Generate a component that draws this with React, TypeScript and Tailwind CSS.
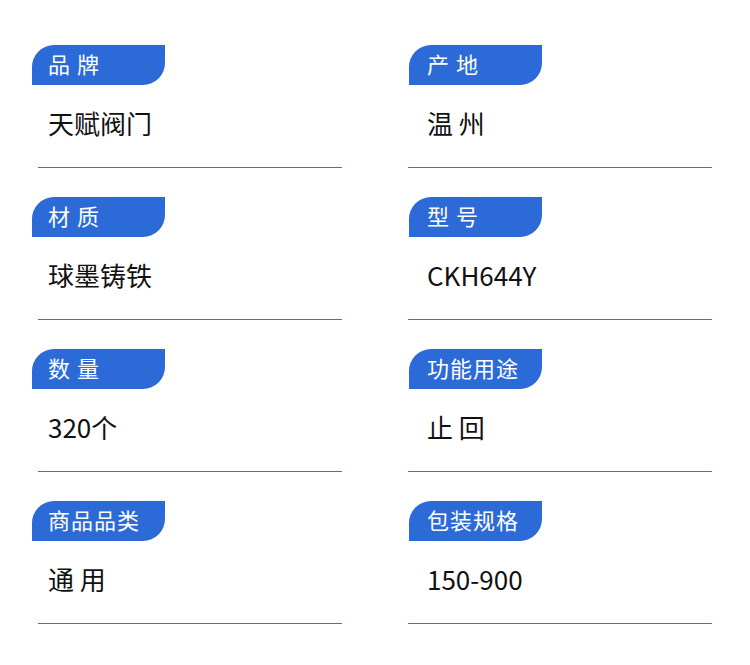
const items = [
  { label: "品 牌", value: "天赋阀门" },
  { label: "产 地", value: "温 州" },
  { label: "材 质", value: "球墨铸铁" },
  { label: "型 号", value: "CKH644Y" },
  { label: "数 量", value: "320个" },
  { label: "功能用途", value: "止 回" },
  { label: "商品品类", value: "通 用" },
  { label: "包装规格", value: "150-900" },
];

const Cell = (props: { label: string; value: string; right: boolean }) => {
  return (
    <div className={props.right ? "pl-[1px]" : ""}>
      <div
        className={
          "h-[40px] w-[133px] bg-[#2c6bd7] text-white text-[22px] leading-[36px] rounded-tl-[22px] rounded-br-[22px] tracking-[1px] " +
          (props.right ? "pl-[18px]" : "pl-[16px]")
        }
      >
        {props.label}
      </div>
      <p
        className={
          "mt-[20px] text-[26px] leading-[36px] text-[#111] " +
          (props.right ? "pl-[18px]" : "pl-[16px]")
        }
      >
        {props.value}
      </p>
      <div
        className={
          "mt-[26px] h-[1px] bg-[#4a70b8] w-[304px] " +
          (props.right ? "-ml-[1px]" : "ml-[6px]")
        }
      />
    </div>
  );
};

export default function App() {
  return (
    <div
      className="w-[750px] h-[665px] bg-white pt-[45px] pl-[32px]"
      style={{ fontFamily: '"Noto Sans CJK SC", "Noto Sans", sans-serif' }}
    >
      <div className="grid grid-cols-[310px_310px] gap-x-[66px] gap-y-[29px]">
        {items.map((item, i) => (
          <Cell key={i} label={item.label} value={item.value} right={i % 2 === 1} />
        ))}
      </div>
    </div>
  );
}
